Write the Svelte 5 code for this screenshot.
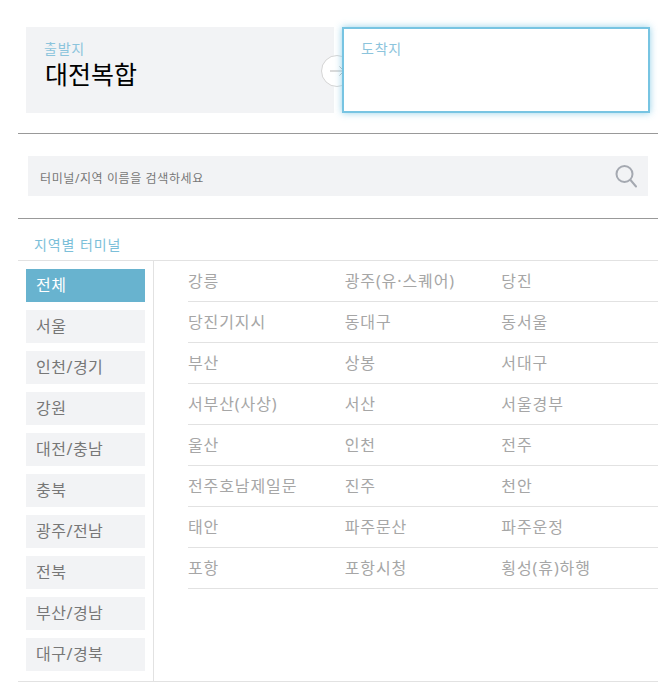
<script lang="ts">
  const regions = ['전체', '서울', '인천/경기', '강원', '대전/충남', '충북', '광주/전남', '전북', '부산/경남', '대구/경북'];
  const terminals = [
    '강릉', '광주(유·스퀘어)', '당진',
    '당진기지시', '동대구', '동서울',
    '부산', '상봉', '서대구',
    '서부산(사상)', '서산', '서울경부',
    '울산', '인천', '전주',
    '전주호남제일문', '진주', '천안',
    '태안', '파주문산', '파주운정',
    '포항', '포항시청', '횡성(휴)하행'
  ];
</script>

<div class="page">
  <div class="route">
    <div class="place from">
      <span class="label">출발지</span>
      <strong class="name">대전복합</strong>
      <span class="arrow">
        <svg width="32" height="32" viewBox="0 0 32 32" fill="none">
          <circle cx="16" cy="16" r="15.5" fill="#fff" stroke="#d4d4d4" />
          <path d="M9 16H23M18.5 11.5L23 16L18.5 20.5" stroke="#b5b5b5" stroke-width="1" />
        </svg>
      </span>
    </div>
    <div class="place to">
      <span class="label">도착지</span>
    </div>
  </div>

  <div class="search-wrap">
    <div class="search">
      <span class="hint">터미널/지역 이름을 검색하세요</span>
      <svg width="22" height="24" viewBox="0 0 22 24" fill="none" stroke="#a5a9b1" stroke-width="2">
        <circle cx="9.5" cy="10" r="8" />
        <path d="M15.5 16L21 22.5" stroke-linecap="round" />
      </svg>
    </div>
  </div>

  <h2 class="title">지역별 터미널</h2>

  <div class="browser">
    <ul class="regions">
      {#each regions as region, i}
        <li class:active={i === 0}>{region}</li>
      {/each}
    </ul>
    <ul class="terminals">
      {#each terminals as terminal}
        <li>{terminal}</li>
      {/each}
    </ul>
  </div>
</div>

<style>
  :global(body) {
    margin: 0;
    background: #fff;
    font-family: "Noto Sans", "Noto Sans CJK KR", sans-serif;
  }

  .page {
    width: 640px;
    margin-left: 18px;
    padding-top: 27px;
  }

  .route {
    display: flex;
    gap: 8px;
    padding: 0 8px 20px;
    border-bottom: 1px solid #999;
  }

  .place {
    position: relative;
    box-sizing: border-box;
    width: 308px;
    height: 86px;
    display: flex;
    flex-direction: column;
  }

  .from {
    background: #f2f3f5;
    padding: 13px 18px;
  }

  .to {
    background: #fff;
    border: 2px solid #77c4e2;
    box-shadow: 0 0 7px rgba(119, 196, 226, 0.8);
    padding: 11px 17px;
    z-index: 1;
  }

  .label {
    font-size: 14px;
    line-height: 18px;
    letter-spacing: 0.8px;
    color: #8cc4dc;
  }

  .name {
    font-size: 25px;
    font-weight: 400;
    line-height: 32px;
    color: #000;
    margin-left: 1px;
  }

  .arrow {
    position: absolute;
    left: 295px;
    top: 28px;
    width: 32px;
    height: 32px;
  }

  .search-wrap {
    padding: 22px 10px;
    border-bottom: 1px solid #999;
  }

  .search {
    height: 40px;
    background: #f2f3f5;
    display: flex;
    align-items: center;
    justify-content: space-between;
    padding: 0 11px 0 12px;
    font-size: 12px;
    letter-spacing: 0.6px;
    color: #777;
  }

  .hint {
    padding-top: 4px;
  }

  .title {
    margin: 0;
    height: 42px;
    box-sizing: border-box;
    padding: 16px 0 0 16px;
    font-size: 14px;
    line-height: 20px;
    letter-spacing: 0.9px;
    font-weight: 400;
    color: #7cbfd9;
    border-bottom: 1px solid #e2e2e2;
  }

  .browser {
    display: flex;
    border-bottom: 1px solid #e2e2e2;
  }

  ul {
    list-style: none;
    margin: 0;
  }

  .regions {
    box-sizing: border-box;
    width: 136px;
    padding: 8px 8px 2px;
    border-right: 1px solid #e2e2e2;
    flex: none;
  }

  .regions li {
    height: 33px;
    margin-bottom: 8px;
    padding-left: 10px;
    font-size: 16px;
    line-height: 33px;
    letter-spacing: 0.5px;
    color: #777;
    background: #f2f3f5;
  }

  .regions li.active {
    background: #68b3cf;
    color: #fff;
  }

  .terminals {
    flex: 1;
    padding: 0 0 0 34px;
    display: grid;
    grid-template-columns: repeat(3, 1fr);
    align-content: start;
  }

  .terminals li {
    box-sizing: border-box;
    height: 41px;
    padding-top: 5px;
    font-size: 16px;
    line-height: 30px;
    letter-spacing: 0.9px;
    color: #a6a6a6;
    border-bottom: 1px solid #e2e2e2;
  }
</style>
